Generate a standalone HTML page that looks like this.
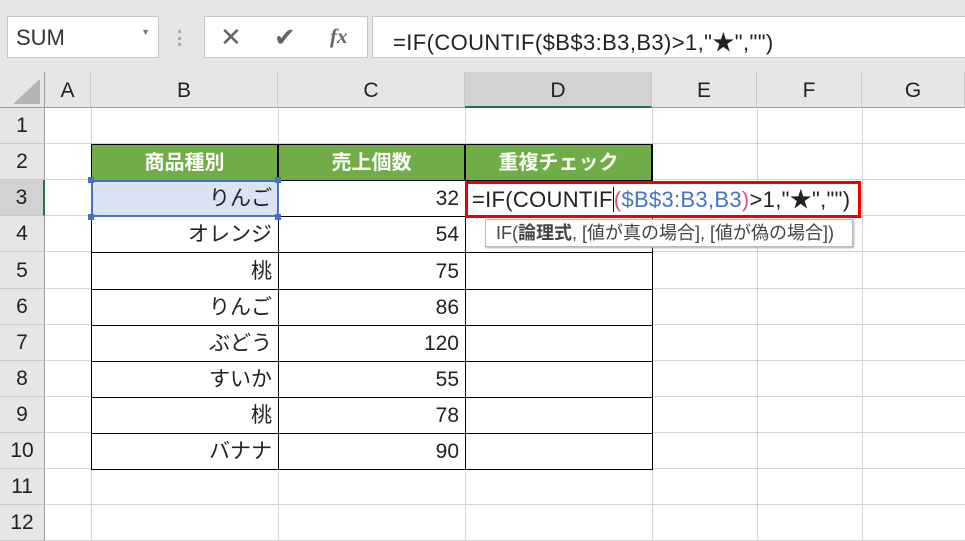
<!DOCTYPE html><html><head><meta charset="utf-8"><style>
*{margin:0;padding:0;box-sizing:border-box}
body{width:965px;height:541px;overflow:hidden;background:#fff;font-family:"Liberation Sans","Noto Sans CJK JP",sans-serif;position:relative}
.a{position:absolute}
.top{left:0;top:0;width:965px;height:72px;background:#e6e6e6}
.box{background:#fff;border:1px solid #c6c6c6}
.ch{top:72px;height:36px;background:#e6e6e6;border-right:1px solid #c8c8c8;border-bottom:1px solid #9e9e9e;font-size:21px;color:#222;text-align:center;line-height:38px}
.rh{left:0;width:45px;background:#e6e6e6;border-bottom:1px solid #c8c8c8;border-right:1px solid #9e9e9e;font-size:21px;color:#222;text-align:center}
.vl{top:108px;width:1px;height:433px;background:#d4d4d4}
.hl{left:45px;width:920px;height:1px;background:#d4d4d4}
.c{font-size:21px;color:#222;text-align:right;padding-right:6px}
.g{background:#70ad47;color:#fff;font-weight:bold;font-size:20px;text-align:center}
</style></head><body>
<div class="a top"></div>
<div class="a box" style="left:7px;top:16px;width:152px;height:42px;font-size:22px;color:#333;padding:8px 0 0 8px">SUM<span class="a" style="right:8px;top:10px;font-size:9px;color:#777">▼</span></div>
<div class="a" style="left:178px;top:30px;width:4px;height:16px;border-left:3px dotted #aaa"></div>
<div class="a box" style="left:204px;top:16px;width:164px;height:42px"></div>
<div class="a" style="left:220px;top:22px;font-size:26px;color:#666">✕</div>
<div class="a" style="left:274px;top:22px;font-size:26px;color:#666">✔</div>
<div class="a" style="left:330px;top:24px;font-size:21px;color:#666;font-style:italic;font-family:'Liberation Serif',serif;font-weight:bold">fx</div>
<div class="a box" style="left:372px;top:16px;width:600px;height:42px;font-size:22px;letter-spacing:0.4px;color:#222;padding:8px 0 0 20px">=IF(COUNTIF($B$3:B3,B3)&gt;1,"★","")</div>
<div class="a" style="left:0;top:72px;width:45px;height:36px;background:#e6e6e6;border-right:1px solid #9e9e9e;border-bottom:1px solid #9e9e9e"></div>
<svg class="a" style="left:10px;top:77px" width="32" height="28"><polygon points="30,2 30,27 3,27" fill="#b5b5b5"/></svg>
<div class="a ch" style="left:45px;width:46px">A</div>
<div class="a ch" style="left:91px;width:187px">B</div>
<div class="a ch" style="left:278px;width:187px">C</div>
<div class="a ch" style="left:465px;width:187px;background:#d2d2d2;border-bottom:2px solid #217346">D</div>
<div class="a ch" style="left:652px;width:105px">E</div>
<div class="a ch" style="left:757px;width:105px">F</div>
<div class="a ch" style="left:862px;width:103px">G</div>
<div class="a vl" style="left:91px"></div><div class="a vl" style="left:278px"></div><div class="a vl" style="left:465px"></div><div class="a vl" style="left:652px"></div><div class="a vl" style="left:757px"></div><div class="a vl" style="left:862px"></div>
<div id="rows"></div>
<script>
var y0=108,h=36.1,s='';
var d=[["りんご","32"],["オレンジ","54"],["桃","75"],["りんご","86"],["ぶどう","120"],["すいか","55"],["桃","78"],["バナナ","90"]];
for(var i=0;i<12;i++){var t=Math.round(y0+i*h),b=Math.round(y0+(i+1)*h),hh=b-t;
s+='<div class="a rh" style="top:'+t+'px;height:'+hh+'px;line-height:'+hh+'px;'+(i==2?'background:#d2d2d2;border-right:2px solid #217346':'')+'">'+(i+1)+'</div>';
s+='<div class="a hl" style="top:'+(b-1)+'px"></div>';
if(i==1){s+='<div class="a g" style="left:91px;top:'+t+'px;width:562px;height:'+(hh+1)+'px;border:1px solid #000"></div>';
['商品種別','売上個数','重複チェック'].forEach(function(x,k){s+='<div class="a g" style="left:'+(91+k*187)+'px;top:'+t+'px;width:187px;height:'+(hh+1)+'px;line-height:'+hh+'px;border:1px solid #000">'+x+'</div>'});}
if(i>=2&&i<=9){var r=d[i-2];['b','c','d'].forEach(function(x,k){s+='<div class="a c" style="left:'+(91+k*187)+'px;top:'+t+'px;width:188px;height:'+(hh+1)+'px;line-height:'+hh+'px;border:1px solid #000;'+(i==2&&k==0?'background:#d9e3f3;':'background:#fff;')+'">'+(k==0?r[0]:k==1?r[1]:'')+'</div>'});}
}
document.getElementById('rows').innerHTML=s;
</script>
<div class="a" style="left:91px;top:180px;width:188px;height:37px;border:2px solid #4472c4"></div>
<div class="a" style="left:88px;top:177px;width:6px;height:6px;background:#4472c4"></div>
<div class="a" style="left:275px;top:177px;width:6px;height:6px;background:#4472c4"></div>
<div class="a" style="left:88px;top:214px;width:6px;height:6px;background:#4472c4"></div>
<div class="a" style="left:275px;top:214px;width:6px;height:6px;background:#4472c4"></div>
<div class="a" style="left:465px;top:181px;width:396px;height:37px;border:3px solid #e00;background:#fff;font-size:22px;letter-spacing:0.3px;line-height:31px;padding-left:4px;color:#222;white-space:nowrap">=IF(COUNTIF<span style="border-left:1px solid #000"></span><span style="color:#e0507a">(</span><span style="color:#4472c4">$B$3:B3,B3</span><span style="color:#e0507a">)</span>&gt;1,"★","")</div>
<div class="a" style="left:485px;top:219px;width:368px;height:28px;background:#fff;border:1px solid #bbb;box-shadow:1px 1px 2px #aaa;font-size:18px;color:#444;line-height:26px;padding-left:10px;white-space:nowrap">IF(<b>論理式</b>, [値が真の場合], [値が偽の場合])</div>
</body></html>
